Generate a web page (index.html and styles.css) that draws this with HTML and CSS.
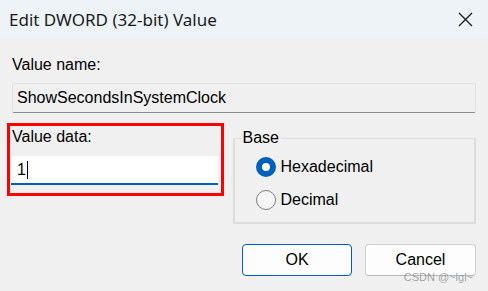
FILE: index.html
```html
<!DOCTYPE html>
<html>
<head>
    <meta charset="utf-8">
    <title>Edit DWORD (32-bit) Value</title>
    <link rel="stylesheet" href="styles.css">
</head>
<body>
<div id="dialog">
    <div id="titlebar">
        <span class="title">Edit DWORD (32-bit) Value</span>
        <svg class="close" width="15" height="15" viewBox="0 0 15 15">
            <path d="M1 1 L14 14 M14 1 L1 14" stroke="#1b1b1b" stroke-width="1.3" fill="none"/>
        </svg>
    </div>
    <div id="content">
        <div class="label">Value name:</div>
        <div class="namebox">ShowSecondsInSystemClock</div>
        <div class="row">
            <div class="databox">
                <div class="label">Value data:</div>
                <div class="datainput">1<span class="caret"></span></div>
            </div>
            <fieldset class="base">
                <legend>Base</legend>
                <label class="radio"><span class="dot checked"></span>Hexadecimal</label>
                <label class="radio"><span class="dot"></span>Decimal</label>
            </fieldset>
        </div>
        <div class="buttons">
            <div class="btn primary">OK</div>
            <div class="btn">Cancel<span class="mark">CSDN @~lgl~</span></div>
        </div>
    </div>
</div>
</body>
</html>
```

FILE: styles.css
```css
body {
    margin: 0;
    background: #f0f0f0;
    font-family: "Liberation Sans", Arial, sans-serif;
    font-size: 16px;
    color: #000;
}
#titlebar {
    height: 39px;
    background: #edf3f7;
    display: flex;
    align-items: center;
    justify-content: space-between;
    padding: 0 15px 0 9px;
}
#titlebar .title {
    font-family: "Noto Sans", "Open Sans", sans-serif;
    font-size: 17px;
    color: #1b1b1b;
}
#content {
    padding: 17px 12px 15px 12px;
}
.label {
    line-height: 18px;
}
.namebox {
    margin-top: 9px;
    height: 30px;
    box-sizing: border-box;
    border: 1px solid #e2e2e2;
    border-bottom: 1px solid #8a8a8a;
    border-radius: 2px;
    padding: 5px 4px 0 4px;
    line-height: 18px;
}
.row {
    display: flex;
    align-items: flex-start;
    margin-top: 10px;
}
.databox {
    margin-left: -5px;
    width: 217px;
    height: 73px;
    box-sizing: border-box;
    border: 3px solid #ff0000;
    padding: 2px 3px 0 1px;
}
.databox .label {
    padding-left: 1px;
}
.datainput {
    margin-top: 10px;
    height: 29px;
    box-sizing: border-box;
    background: #fff;
    border-bottom: 2px solid #005fb8;
    padding: 5px 0 0 6px;
    line-height: 18px;
}
.caret {
    display: inline-block;
    width: 1px;
    height: 18px;
    background: #000;
    vertical-align: top;
    margin-left: 1px;
}
.base {
    margin: 7px 0 0 9px;
    width: 244px;
    height: 94px;
    box-sizing: border-box;
    border: 2px solid #dcdcdc;
    border-top-width: 1px;
    padding: 11px 0 0 21px;
}
.base legend {
    margin-left: -15px;
    padding: 0 2px;
    line-height: 16px;
}
.radio {
    display: flex;
    align-items: center;
    height: 20px;
    margin-bottom: 13px;
}
.dot {
    width: 20px;
    height: 20px;
    box-sizing: border-box;
    border-radius: 50%;
    border: 1px solid #808080;
    background: #f6f6f6;
    margin-right: 5px;
}
.dot.checked {
    border: 6px solid #005fb8;
    background: #fff;
}
.buttons {
    display: flex;
    justify-content: flex-end;
    gap: 13px;
    margin-top: 20px;
}
.btn {
    position: relative;
    width: 111px;
    height: 32px;
    box-sizing: border-box;
    border: 1px solid #d0d0d0;
    border-bottom-color: #b8b8b8;
    border-radius: 4px;
    background: #fdfdfd;
    display: flex;
    align-items: center;
    justify-content: center;
}
.btn.primary {
    width: 110px;
    border-color: #005fb8;
}
.mark {
    position: absolute;
    right: 2px;
    top: 26px;
    font-size: 11px;
    line-height: 12px;
    color: rgba(140, 140, 140, 0.8);
    white-space: nowrap;
}
```
